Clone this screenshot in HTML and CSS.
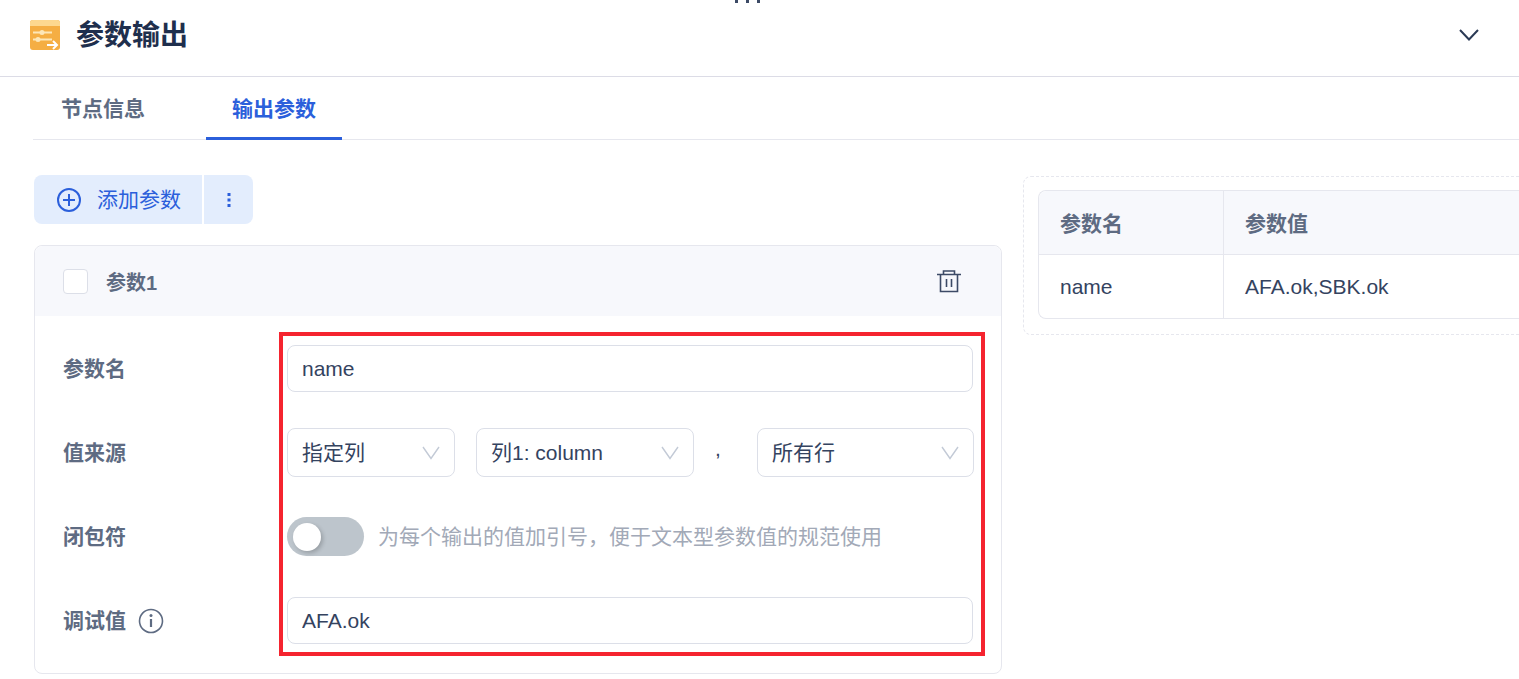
FILE: index.html
```html
<!DOCTYPE html>
<html>

<head>
    <meta charset="UTF-8">
    <title>参数输出</title>
    <link rel="stylesheet" href="styles.css">
</head>

<body>
    <div class="top-dots"><i></i><i></i><i></i></div>

    <div class="header">
        <svg class="header-icon" width="30" height="30" viewBox="0 0 30 30">
            <rect x="0" y="0" width="30" height="30" rx="3" fill="#f5ae43"></rect>
            <path d="M0 6V3a3 3 0 0 1 3-3h24a3 3 0 0 1 3 3v3z" fill="#fdd88f"></path>
            <path d="M3 12.500h19M3 19.500h19" stroke="#fde7b8" stroke-width="2" fill="none"></path>
            <path d="M17 25h9" stroke="#fff" stroke-width="2" fill="none"></path>
            <path d="M23 21l4 4-4 4" stroke="#fff" stroke-width="2" fill="none"></path>
            <circle cx="12" cy="12.500" r="2.500" fill="#fde7b8"></circle>
            <circle cx="8" cy="19.500" r="2.500" fill="#fde7b8"></circle>
        </svg>
        <h1 class="header-title">参数输出</h1>
        <svg class="header-arrow" width="20" height="12" viewBox="0 0 20 12">
            <path d="M1 1l9 9.500 9-9.500" stroke="#2b3a55" stroke-width="2" fill="none"></path>
        </svg>
    </div>

    <div class="tabs">
        <div class="tab">节点信息</div>
        <div class="tab active">输出参数</div>
    </div>

    <div class="content">
        <div class="left">
            <div class="btn-group">
                <button class="btn btn-add">
                    <svg width="24" height="24" viewBox="0 0 24 24">
                        <circle cx="12" cy="12" r="11" stroke="#2b5fdb" stroke-width="2" fill="none"></circle>
                        <path d="M12 6v12M6 12h12" stroke="#2b5fdb" stroke-width="2" fill="none"></path>
                    </svg>
                    <span class="btn-text">添加参数</span>
                </button>
                <button class="btn btn-more">
                    <svg width="4" height="14" viewBox="0 0 4 14">
                        <rect x="0.500" y="0" width="3" height="3" fill="#2b5fdb"></rect>
                        <rect x="0.500" y="5.500" width="3" height="3" fill="#2b5fdb"></rect>
                        <rect x="0.500" y="11" width="3" height="3" fill="#2b5fdb"></rect>
                    </svg>
                </button>
            </div>

            <div class="card">
                <div class="card-head">
                    <span class="checkbox"></span>
                    <span class="card-name">参数1</span>
                    <svg class="trash" width="24" height="24" viewBox="0 0 24 24">
                        <path d="M0 5.500h24M6.500 5.500v-3.500h11v3.500M3.500 5.500v17h17v-17M9.500 10v8M14.500 10v8" stroke="#3c4a66" stroke-width="1.600" fill="none"></path>
                    </svg>
                </div>
                <div class="card-body">
                    <div class="row">
                        <label class="row-label">参数名</label>
                        <input class="input" type="text" value="name">
                    </div>
                    <div class="row">
                        <label class="row-label">值来源</label>
                        <div class="select select-type">指定列
                            <svg width="18" height="14" viewBox="0 0 18 14"><path d="M1 1l8 11.500 8-11.500" stroke="#c3cad6" stroke-width="1.400" fill="none"></path></svg>
                        </div>
                        <div class="select select-col">列1: column
                            <svg width="18" height="14" viewBox="0 0 18 14"><path d="M1 1l8 11.500 8-11.500" stroke="#c3cad6" stroke-width="1.400" fill="none"></path></svg>
                        </div>
                        <span class="comma">,</span>
                        <div class="select select-line">所有行
                            <svg width="18" height="14" viewBox="0 0 18 14"><path d="M1 1l8 11.500 8-11.500" stroke="#c3cad6" stroke-width="1.400" fill="none"></path></svg>
                        </div>
                    </div>
                    <div class="row">
                        <label class="row-label">闭包符</label>
                        <span class="switch"><span class="knob"></span></span>
                        <span class="hint">为每个输出的值加引号，便于文本型参数值的规范使用</span>
                    </div>
                    <div class="row">
                        <label class="row-label">调试值
                            <svg width="26" height="26" viewBox="0 0 26 26">
                                <circle cx="13" cy="13" r="11.500" stroke="#5e6b82" stroke-width="1.600" fill="none"></circle>
                                <path d="M13 11v8" stroke="#5e6b82" stroke-width="2.200" fill="none"></path>
                                <circle cx="13" cy="7.500" r="1.500" fill="#5e6b82"></circle>
                            </svg>
                        </label>
                        <input class="input" type="text" value="AFA.ok">
                    </div>
                    <div class="red-box"></div>
                </div>
            </div>
        </div>

        <div class="right">
            <div class="preview">
                <div class="preview-table">
                    <div class="cell head">参数名</div>
                    <div class="cell head col2">参数值</div>
                    <div class="cell body">name</div>
                    <div class="cell body col2">AFA.ok,SBK.ok</div>
                </div>
            </div>
        </div>
    </div>
</body>

</html>
```

FILE: styles.css
```css
* {
    box-sizing: border-box;
}

html,
body {
    margin: 0;
    height: 679px;
    overflow: hidden;
    background-color: #fff;
}

body {
    position: relative;
    font-family: "Liberation Sans", "Noto Sans CJK SC", sans-serif;
    font-size: 21px;
    color: #34435f;
}

.top-dots {
    position: absolute;
    top: 0;
    left: 735px;
    display: flex;
    gap: 8px;
}

.top-dots i {
    width: 3px;
    height: 3px;
    background-color: #3c4a66;
}

.header {
    display: flex;
    align-items: center;
    height: 77px;
    padding: 0 40px 7px 30px;
    border-bottom: 1px solid #dcdce6;
}

.header-title {
    margin: 0 0 4px 16px;
    font-size: 28px;
    font-weight: 700;
    color: #1f2f4d;
}

.header-arrow {
    margin-left: auto;
}

.tabs {
    display: flex;
    height: 63px;
    margin-left: 33px;
    border-bottom: 1px solid #e6e7ee;
}

.tab {
    height: 63px;
    padding: 15px 26px 0;
    margin-left: 2px;
    font-weight: 700;
    color: #5e6b82;
}

.tab + .tab {
    margin-left: 35px;
}

.tab.active {
    color: #2b5fdb;
    border-bottom: 3px solid #2b5fdb;
}

.content {
    display: flex;
    padding: 35px 0 0 34px;
}

.left {
    flex: none;
    width: 968px;
}

.btn-group {
    display: flex;
    gap: 2px;
}

.btn {
    display: flex;
    align-items: center;
    height: 49px;
    border: none;
    font: inherit;
    color: #2b5fdb;
    background-color: #e3edfd;
    cursor: pointer;
}

.btn-add {
    width: 168px;
    padding: 0 0 0 23px;
    gap: 16px;
    border-radius: 8px 0 0 8px;
}

.btn-text {
    padding-bottom: 3px;
}

.btn-more {
    justify-content: center;
    width: 49px;
    padding: 0;
    border-radius: 0 8px 8px 0;
}

.card {
    height: 429px;
    margin-top: 21px;
    border: 1px solid #e6e7ee;
    border-radius: 8px;
}

.card-head {
    display: flex;
    align-items: center;
    height: 70px;
    padding: 0 40px 0 28px;
    background-color: #f7f8fc;
    border-radius: 8px 8px 0 0;
}

.checkbox {
    width: 25px;
    height: 25px;
    background-color: #fff;
    border: 1px solid #dcdfe8;
    border-radius: 4px;
}

.card-name {
    margin-left: 18px;
    font-size: 20px;
    font-weight: 700;
    color: #5e6b82;
}

.trash {
    margin-left: auto;
}

.card-body {
    position: relative;
    padding: 28px 28px 0;
}

.row {
    display: flex;
    align-items: center;
    height: 49px;
    margin-bottom: 35px;
}

.row-label {
    display: flex;
    align-items: center;
    gap: 12px;
    flex: none;
    width: 224px;
    padding-bottom: 3px;
    font-weight: 700;
    color: #5e6b82;
}

.row-label svg {
    margin-top: 3px;
}

.input {
    flex: 1;
    height: 47px;
    padding: 0 14px;
    font: inherit;
    color: #34435f;
    border: 1px solid #dcdfe8;
    border-radius: 8px;
    outline: none;
}

.select {
    display: flex;
    align-items: center;
    justify-content: space-between;
    flex: none;
    height: 49px;
    padding: 0 14px 3px;
    border: 1px solid #dcdfe8;
    border-radius: 8px;
}

.select svg {
    margin-top: 3px;
}

.select-type {
    width: 168px;
}

.select-col {
    width: 218px;
    margin-left: 21px;
}

.select-line {
    width: 217px;
}

.comma {
    flex: none;
    width: 63px;
    padding: 0 0 7px 21px;
}

.switch {
    display: block;
    flex: none;
    width: 77px;
    height: 39px;
    padding: 6px;
    background-color: #bdc5cc;
    border-radius: 20px;
}

.knob {
    display: block;
    width: 28px;
    height: 28px;
    background-color: #fff;
    border-radius: 50%;
    box-shadow: 2px 2px 4px rgba(0, 0, 0, 0.2);
}

.hint {
    margin-left: 14px;
    padding-bottom: 3px;
    color: #a2a9b7;
}

.red-box {
    position: absolute;
    top: 16px;
    left: 244px;
    width: 706px;
    height: 324px;
    border: 4px solid #f5242f;
}

.right {
    flex: 1;
    min-width: 0;
    margin-left: 21px;
}

.preview {
    width: 520px;
    height: 159px;
    padding: 13px 0 0 14px;
    margin-top: 1px;
    border: 1px dashed #e6e7ee;
    border-right: none;
    border-radius: 8px 0 0 8px;
}

.preview-table {
    display: grid;
    grid-template-columns: 184px 1fr;
    grid-template-rows: 64px 63px;
    border: 1px solid #e6e7ee;
    border-right: none;
    border-radius: 8px 0 0 8px;
}

.cell {
    display: flex;
    align-items: center;
    padding-left: 21px;
}

.head {
    padding-bottom: 2px;
    font-weight: 700;
    color: #5e6b82;
    background-color: #f7f8fc;
    border-bottom: 1px solid #e6e7ee;
}

.head:first-child {
    border-top-left-radius: 8px;
}

.col2 {
    border-left: 1px solid #e6e7ee;
}
```
